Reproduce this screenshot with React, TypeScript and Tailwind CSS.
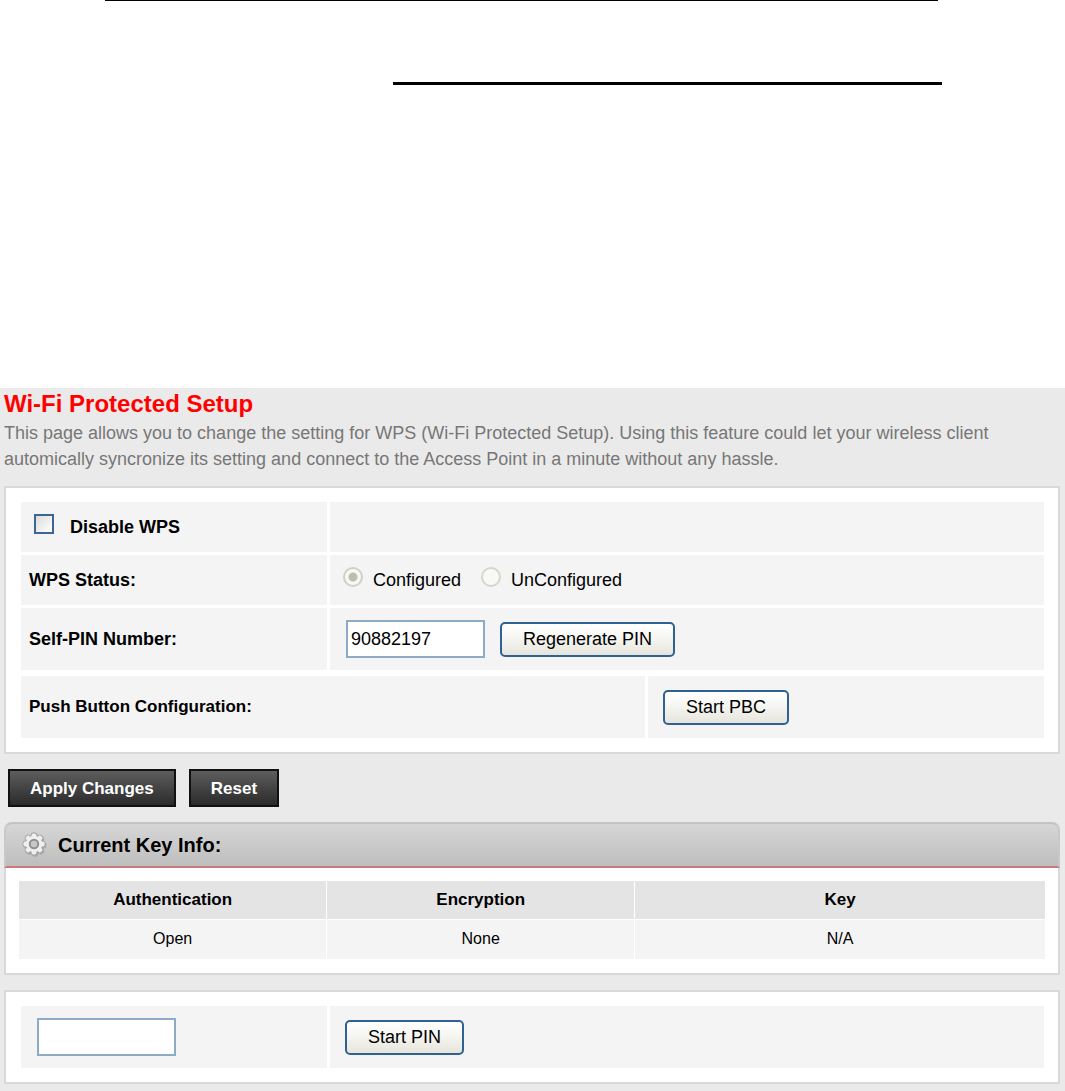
import { useState } from 'react';
import type { ButtonHTMLAttributes, InputHTMLAttributes, ReactNode } from 'react';

const keyRows = [{ auth: 'Open', encryption: 'None', key: 'N/A' }];

function Cell({ children }: { children?: ReactNode }) {
  return <div className="flex items-center bg-[#f4f4f4]">{children}</div>;
}

function TextBox(props: InputHTMLAttributes<HTMLInputElement>) {
  return (
    <input
      type="text"
      {...props}
      className="h-[38px] w-[139px] border-2 border-[#8dabc6] bg-white px-[3px] text-lg text-black outline-none"
    />
  );
}

function XpButton(props: ButtonHTMLAttributes<HTMLButtonElement>) {
  return (
    <button
      type="button"
      {...props}
      className="h-[35px] rounded-[5px] border-2 border-[#2f6192] bg-linear-to-b from-white via-[#f4f4f0] to-[#e6e5dc] px-[21px] text-lg leading-none text-black"
    />
  );
}

function DarkButton(props: ButtonHTMLAttributes<HTMLButtonElement>) {
  return (
    <button
      {...props}
      className="h-[38px] border-2 border-[#111] bg-linear-to-b from-[#5e5e5e] to-[#2b2b2b] px-5 text-[17px] leading-none font-bold text-white"
    />
  );
}

function GearShape() {
  const teeth = [0, 45, 90, 135, 180, 225, 270, 315];
  return (
    <>
      {teeth.map((a) => (
        <rect key={a} x="9.6" y="1.4" width="4.8" height="6" rx="1.6" transform={`rotate(${a} 12 12)`} />
      ))}
      <circle cx="12" cy="12" r="8.2" />
    </>
  );
}

function GearIcon() {
  return (
    <svg width="26" height="26" viewBox="0 0 26 26" aria-hidden="true">
      {/* soft shadow to the lower right */}
      <g transform="translate(1.2 1.4)" fill="#8a8a8a" stroke="#8a8a8a" strokeWidth="1.4" opacity="0.45">
        <GearShape />
      </g>
      <g fill="#9c9c9c" stroke="#9c9c9c" strokeWidth="1.6">
        <GearShape />
      </g>
      <g fill="#efefef">
        <GearShape />
      </g>
      <circle cx="12" cy="12" r="4.2" fill="#c8c8c8" stroke="#909090" strokeWidth="2" />
    </svg>
  );
}

export default function App() {
  const [disabled, setDisabled] = useState(false);
  const [pin, setPin] = useState('90882197');
  const [clientPin, setClientPin] = useState('');

  return (
    <div className="min-h-screen bg-white font-['Liberation_Sans',Arial,sans-serif] text-lg text-black">
      <hr className="mr-[127px] ml-[105px] border-t border-black" />
      <hr className="mt-[81px] mr-[123px] ml-[393px] border-t-[3px] border-black" />

      <main className="mt-[303px] bg-[#eaeaea] pr-[5px] pb-[7px] pl-1">
        <h1 className="text-2xl leading-8 font-bold text-[#ff0000]">Wi-Fi Protected Setup</h1>
        <p className="text-lg leading-[26px] text-[#777]">
          This page allows you to change the setting for WPS (Wi-Fi Protected Setup). Using this feature could let your wireless client
          <br />
          automically syncronize its setting and connect to the Access Point in a minute without any hassle.
        </p>

        <form onSubmit={(e) => e.preventDefault()}>
          <section className="mt-3.5 border-2 border-[#d9d9d9] bg-white py-3.5 pr-3.5 pl-[15px]">
            <div className="grid grid-cols-[3fr_7fr] grid-rows-[50px_50px_62px] gap-[3px]">
              <Cell>
                <label className="flex items-center gap-4 pl-[13px] text-lg font-bold">
                  <input
                    type="checkbox"
                    checked={disabled}
                    onChange={(e) => setDisabled(e.target.checked)}
                    className="mb-1.5 size-5 appearance-none border-2 border-[#3a6896] bg-linear-to-br from-[#dcdcd7] to-white checked:bg-[#3a6896]"
                  />
                  Disable WPS
                </label>
              </Cell>
              <Cell />
              <Cell>
                <span className="pl-2 font-bold">WPS Status:</span>
              </Cell>
              <Cell>
                <div className="flex gap-5 pl-[13px]">
                  <label className="flex items-center gap-2.5">
                    <input
                      type="radio"
                      name="wpsStatus"
                      disabled
                      defaultChecked
                      className="mb-1.5 size-5 appearance-none rounded-full border-2 border-[#d0d0c4] bg-[radial-gradient(circle,#bdbdb0_0_4px,#f8f8f6_5px)]"
                    />
                    Configured
                  </label>
                  <label className="flex items-center gap-2.5">
                    <input
                      type="radio"
                      name="wpsStatus"
                      disabled
                      className="mb-1.5 size-5 appearance-none rounded-full border-2 border-[#d6d6cb] bg-[#f8f8f6]"
                    />
                    UnConfigured
                  </label>
                </div>
              </Cell>
              <Cell>
                <label htmlFor="selfPin" className="pl-2 font-bold">Self-PIN Number:</label>
              </Cell>
              <Cell>
                <div className="flex items-center gap-[15px] pl-4">
                  <TextBox id="selfPin" value={pin} onChange={(e) => setPin(e.target.value)} />
                  <XpButton>Regenerate PIN</XpButton>
                </div>
              </Cell>
            </div>

            <div className="mt-1.5 grid h-[62px] grid-cols-[624fr_396fr] gap-[3px]">
              <Cell>
                <span className="pl-2 text-[17px] font-bold">Push Button Configuration:</span>
              </Cell>
              <Cell>
                <div className="pl-[15px]">
                  <XpButton>Start PBC</XpButton>
                </div>
              </Cell>
            </div>
          </section>

          <div className="flex gap-[13px] py-[15px] pl-1">
            <DarkButton type="submit">Apply Changes</DarkButton>
            <DarkButton type="reset">Reset</DarkButton>
          </div>
        </form>

        <section>
          <h2 className="flex h-[46px] items-center gap-2.5 rounded-t-lg border-2 border-x-[#c9c9c9] border-t-[#c4c4c4] border-b-[#d07878] bg-linear-to-b from-[#d6d6d6] to-[#bebebe] pl-4 text-xl font-bold">
            <GearIcon />
            Current Key Info:
          </h2>
          <div className="border-2 border-t-0 border-[#d9d9d9] bg-white px-[13px] pt-[13px] pb-3.5">
            <table className="w-full table-fixed border-collapse text-center text-base">
              <thead>
                <tr className="h-[38px] bg-[#e4e4e4] text-[17px]">
                  <th scope="col" className="w-[30%] border-r border-b border-white">Authentication</th>
                  <th scope="col" className="w-[30%] border-r border-b border-white">Encryption</th>
                  <th scope="col" className="border-b border-white">Key</th>
                </tr>
              </thead>
              <tbody>
                {keyRows.map((row) => (
                  <tr key={row.auth} className="h-10 bg-[#f4f4f4]">
                    <td className="border-r border-white">{row.auth}</td>
                    <td className="border-r border-white">{row.encryption}</td>
                    <td>{row.key}</td>
                  </tr>
                ))}
              </tbody>
            </table>
          </div>
        </section>

        <section className="mt-[15px] border-2 border-[#d9d9d9] bg-white py-3.5 pr-3.5 pl-[15px]">
          <div className="grid h-[62px] grid-cols-[3fr_7fr] gap-[3px]">
            <Cell>
              <div className="pl-4">
                <TextBox aria-label="Client PIN" value={clientPin} onChange={(e) => setClientPin(e.target.value)} />
              </div>
            </Cell>
            <Cell>
              <div className="pl-[15px]">
                <XpButton>Start PIN</XpButton>
              </div>
            </Cell>
          </div>
        </section>
      </main>
    </div>
  );
}
